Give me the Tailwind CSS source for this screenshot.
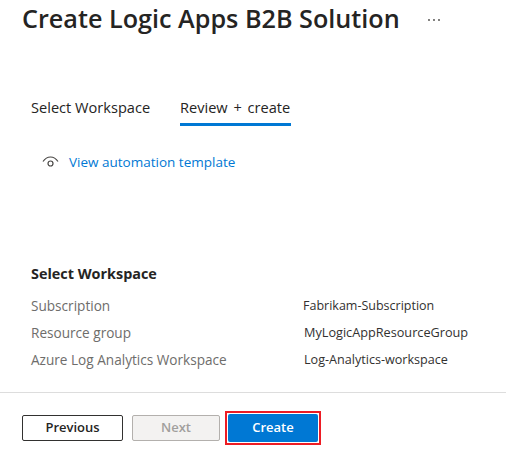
<!DOCTYPE html>
<html lang="en">
<head>
  <meta charset="UTF-8" />
  <title>Create Logic Apps B2B Solution</title>
  <script src="https://cdn.jsdelivr.net/npm/@tailwindcss/browser@4"></script>
</head>
<body class="bg-white font-['Open_Sans',sans-serif] text-[#252423] overflow-hidden">
  <div class="w-[506px] h-[454px] flex flex-col">
    <div class="h-[40px] pl-[22px] flex items-center">
      <h1 class="text-[25.2px] leading-[38px] font-semibold w-[405px] mb-[4px] whitespace-nowrap">Create Logic Apps B2B Solution</h1>
      <svg class="w-[14px] h-[4px]" viewBox="0 0 14 4" fill="#484644">
        <circle cx="2" cy="2" r="0.9" /><circle cx="7" cy="2" r="0.9" /><circle cx="12" cy="2" r="0.9" />
      </svg>
    </div>

    <div class="mt-[56px] pl-[31px] flex text-[14.6px] leading-[22px]">
      <div class="w-[149px] whitespace-nowrap h-[30px]">Select Workspace</div>
      <div class="w-[111px] whitespace-nowrap h-[30px] border-b-[3px] border-[#0078d4] [word-spacing:2px]">Review + create</div>
    </div>

    <div class="mt-[24px] pl-[42px] flex items-center h-[24px]">
      <svg class="w-[17px] h-[12px] text-[#484644]" viewBox="0 0 17 12" fill="none" stroke="currentColor" stroke-width="1.2">
        <path d="M1 5.5C3 2.5 5.5 1 8.5 1s5.5 1.5 7.5 4.5" />
        <circle cx="8.5" cy="7.5" r="2.5" />
      </svg>
      <a class="ml-[10px] text-[13.5px] text-[#0078d4] whitespace-nowrap">View automation template</a>
    </div>

    <h2 class="mt-[88px] pl-[31px] text-[14.4px] leading-[24px] font-bold">Select Workspace</h2>

    <div class="mt-[6px] pl-[31px] leading-[27px]">
      <div class="flex">
        <div class="w-[272px] text-[13.6px] text-[#6e6d6b]">Subscription</div>
        <div class="text-[12.5px] text-[#323130] whitespace-nowrap">Fabrikam-Subscription</div>
      </div>
      <div class="flex">
        <div class="w-[273px] text-[13.6px] text-[#6e6d6b]">Resource group</div>
        <div class="text-[12.7px] text-[#323130] whitespace-nowrap">MyLogicAppResourceGroup</div>
      </div>
      <div class="flex">
        <div class="w-[273px] text-[13.6px] text-[#6e6d6b] whitespace-nowrap">Azure Log Analytics Workspace</div>
        <div class="text-[12.6px] text-[#323130] whitespace-nowrap">Log-Analytics-workspace</div>
      </div>
    </div>

    <div class="mt-[19px] border-t border-[#dddddd] pl-[22px] pt-[18px] flex items-center">
      <button class="w-[101px] h-[26px] border border-[#323130] rounded-[2px] text-[13px] font-semibold">Previous</button>
      <button class="ml-[9px] w-[88px] h-[26px] border border-[#b3b0ad] bg-[#f3f2f1] text-[#a19f9d] rounded-[2px] text-[13px] font-semibold">Next</button>
      <div class="ml-[5px] p-[1px] border-[2px] border-[#ed1c24]">
        <button class="block w-[90px] h-[28px] bg-[#0078d4] text-white rounded-[2px] text-[13px] font-semibold">Create</button>
      </div>
    </div>
  </div>
</body>
</html>
